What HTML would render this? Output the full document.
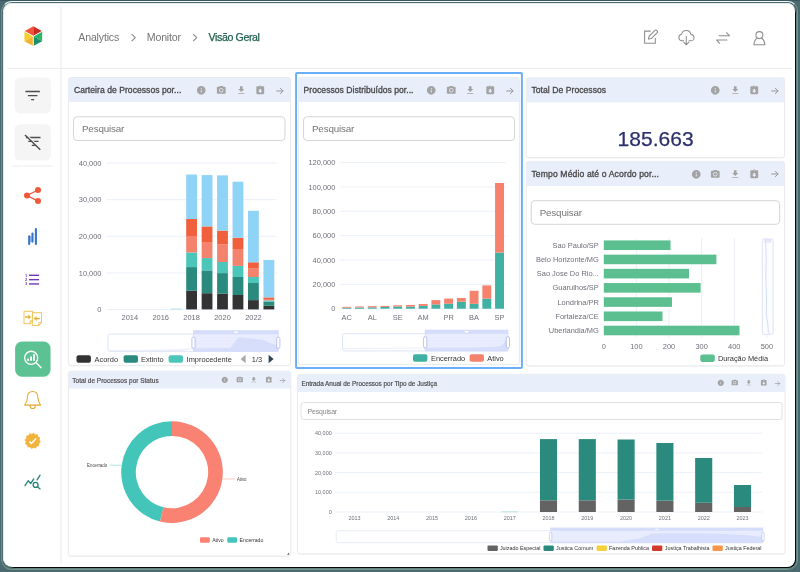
<!DOCTYPE html>
<html lang="pt-BR"><head><meta charset="utf-8"><title>Analytics - Monitor - Visão Geral</title>
<style>
*{box-sizing:border-box;margin:0;padding:0}
html,body{width:800px;height:572px;overflow:hidden;background:#4b6971;font-family:"Liberation Sans", sans-serif}
#frame{position:absolute;left:0;top:0;width:800px;height:572px;background:#4b6971;overflow:hidden;will-change:transform}
#toprow{position:absolute;left:0;top:0;width:800px;height:1px;background:#3a5862}
#bezel{position:absolute;left:1px;top:1px;width:797px;height:569px;box-sizing:border-box;border-style:solid;border-width:1px;border-color:#f6f9f9 #77937f #76927f #738f83;border-radius:11px 10px 10px 11px;background:#4c6a71}
#edge{position:absolute;left:5px;top:5px;width:791px;height:563px;background:#050808;border-radius:9px 8.500px 8px 9px;box-shadow:1px 1px 0 0 #5c867f}
#app{position:absolute;left:3px;top:3px;width:792px;height:564px;background:#fff;border-radius:8.500px 8px 7.500px 9px;overflow:hidden}
#tint{position:absolute;left:0;top:0;right:0;bottom:0;border-radius:8.500px 8px 7.500px 9px;box-shadow:inset 1px 1px 0 0 #e6ecec;pointer-events:none}
.bc{position:absolute;top:27px;height:20px;line-height:20px;font-size:10.600px;color:#757575;white-space:nowrap;letter-spacing:-0.180px}
.pt{position:absolute;color:#484848;font-weight:normal;white-space:nowrap;-webkit-text-stroke:0.300px #484848}
.ic{position:absolute;overflow:visible}
.search{position:absolute;color:#757575;white-space:nowrap;letter-spacing:-0.140px}
#ov,#bg{position:absolute;left:0;top:0;width:800px;height:572px;font-family:"Liberation Sans", sans-serif}
.big{position:absolute;left:526.400px;top:127.400px;width:258.500px;text-align:center;font-size:21px;letter-spacing:0.080px;line-height:24px;color:#2b2f6b;white-space:nowrap;-webkit-text-stroke:0.250px #2b2f6b}
</style></head>
<body><div id="frame"><div id="toprow"></div><div id="bezel"></div><div id="edge"></div><div id="app"><div id="tint"></div><div style="position:absolute;left:-3px;top:-3px;width:800px;height:572px"><svg id="bg" viewBox="0 0 800 572"><rect x="60.300" y="7" width="1.300" height="557" fill="#f0f0f0"/><rect x="7" y="67.900" width="784.800" height="1.000" fill="#ebebeb"/><rect x="14.650" y="77.550" width="36.300" height="35.900" rx="5.500" fill="#f5f5f5"/><rect x="14.600" y="124.200" width="36.250" height="36.300" rx="5.500" fill="#f5f5f5"/><rect x="12" y="165.500" width="40.800" height="1.000" fill="#ececec"/><rect x="15.100" y="341.500" width="35.450" height="35.300" rx="7" fill="#5dc293"/><rect x="68.1" y="78" width="222.7" height="288.5" rx="3" fill="#000" opacity="0.035"/><rect x="68.4" y="77.5" width="222.1" height="287.9" rx="2.5" fill="#fff" stroke="#e7e8eb" stroke-width="0.9"/><path d="M68.7 102 v-21.7 a2.5 2.5 0 0 1 2.5 -2.5 h216.5 a2.5 2.5 0 0 1 2.5 2.5 v21.7 z" fill="#e9eefb"/><rect x="296.100" y="73.000" width="225.800" height="294.900" rx="1" fill="#fff" stroke="#69aef8" stroke-width="2"/><rect x="298.1" y="77.8" width="221.6" height="287.7" rx="3" fill="#000" opacity="0.035"/><rect x="298.4" y="77.3" width="221" height="287.1" rx="2.5" fill="#fff" stroke="#e7e8eb" stroke-width="0.9"/><path d="M298.7 102 v-21.9 a2.5 2.5 0 0 1 2.5 -2.5 h215.4 a2.5 2.5 0 0 1 2.5 2.5 v21.9 z" fill="#e9eefb"/><rect x="525.9" y="78.3" width="259" height="80.4" rx="3" fill="#000" opacity="0.035"/><rect x="526.2" y="77.8" width="258.4" height="79.8" rx="2.5" fill="#fff" stroke="#e7e8eb" stroke-width="0.9"/><path d="M526.5 102.5 v-21.9 a2.5 2.5 0 0 1 2.5 -2.5 h252.8 a2.5 2.5 0 0 1 2.5 2.5 v21.9 z" fill="#e9eefb"/><rect x="525.9" y="161.8" width="259" height="205.1" rx="3" fill="#000" opacity="0.035"/><rect x="526.2" y="161.3" width="258.4" height="204.5" rx="2.5" fill="#fff" stroke="#e7e8eb" stroke-width="0.9"/><path d="M526.5 186.1 v-22 a2.5 2.5 0 0 1 2.5 -2.5 h252.8 a2.5 2.5 0 0 1 2.5 2.5 v22 z" fill="#e9eefb"/><rect x="68.1" y="371.7" width="223" height="185.4" rx="3" fill="#000" opacity="0.035"/><rect x="68.4" y="371.2" width="222.4" height="184.8" rx="2.5" fill="#fff" stroke="#e7e8eb" stroke-width="0.9"/><path d="M68.7 388.6 v-14.6 a2.5 2.5 0 0 1 2.5 -2.5 h216.8 a2.5 2.5 0 0 1 2.5 2.5 v14.6 z" fill="#e9eefb"/><rect x="297.2" y="374.8" width="488.2" height="180.1" rx="3" fill="#000" opacity="0.035"/><rect x="297.5" y="374.3" width="487.6" height="179.5" rx="2.5" fill="#fff" stroke="#e7e8eb" stroke-width="0.9"/><path d="M297.8 392.1 v-15 a2.5 2.5 0 0 1 2.5 -2.5 h482 a2.5 2.5 0 0 1 2.5 2.5 v15 z" fill="#e9eefb"/><rect x="73.55" y="116.75" width="211.4" height="23.7" rx="3.5" fill="#fff" stroke="#d2d6d6" stroke-width="1"/><rect x="303.55" y="116.75" width="211" height="23.7" rx="3.5" fill="#fff" stroke="#d2d6d6" stroke-width="1"/><rect x="531.25" y="200.7" width="248.4" height="23.6" rx="3.5" fill="#fff" stroke="#d2d6d6" stroke-width="1"/><rect x="301" y="402.5" width="481.1" height="17" rx="2.5" fill="#fff" stroke="#dfe1e2" stroke-width="1"/></svg><div class="bc" style="left:78.300px">Analytics</div><div class="bc" style="left:146.800px">Monitor</div><div class="bc" style="left:208.600px;color:#24614f;letter-spacing:-0.380px;-webkit-text-stroke:0.250px #24614f">Visão Geral</div><div class="pt" style="left:73.9px;top:78.1px;height:24.5px;line-height:24.5px;font-size:8.6px;letter-spacing:0.032px;-webkit-text-stroke-width:0.3px">Carteira de Processos por...</div><svg class="ic" style="left:196.35px;top:85.25px;width:10.5px;height:10.5px" viewBox="0 0 24 24" fill="#a3a3a3"><path d="M12 2C6.48 2 2 6.48 2 12s4.48 10 10 10 10-4.48 10-10S17.52 2 12 2zm1 15h-2v-6h2v6zm0-8h-2V7h2v2z"/></svg><svg class="ic" style="left:216.05px;top:85.25px;width:10.5px;height:10.5px" viewBox="0 0 24 24" fill="#a3a3a3"><circle cx="12" cy="12" r="3.2"/><path d="M9 2L7.17 4H4c-1.1 0-2 .9-2 2v12c0 1.1.9 2 2 2h16c1.1 0 2-.9 2-2V6c0-1.1-.9-2-2-2h-3.17L15 2H9zm3 15c-2.76 0-5-2.24-5-5s2.240-5 5-5 5 2.240 5 5-2.240 5-5 5z"/></svg><svg class="ic" style="left:235.75px;top:85.25px;width:10.5px;height:10.5px" viewBox="0 0 24 24" fill="#a3a3a3"><path d="M19 9h-4V3H9v6H5l7 7 7-7zM5 18v2h14v-2H5z"/></svg><svg class="ic" style="left:255.35px;top:85.25px;width:10.5px;height:10.5px" viewBox="0 0 24 24" fill="#a3a3a3"><path d="M19 3h-4.180C14.4 1.84 13.3 1 12 1c-1.3 0-2.400.84-2.820 2H5c-1.100 0-2 .9-2 2v14c0 1.100.9 2 2 2h14c1.100 0 2-.9 2-2V5c0-1.100-.9-2-2-2zm-7 0c.55 0 1 .45 1 1s-.45 1-1 1-1-.45-1-1 .45-1 1-1zm0 15l-5-5h3V9h4v4h3l-5 5z"/></svg><svg class="ic" style="left:275.11px;top:85.51px;width:9.97px;height:9.97px" viewBox="0 0 24 24" fill="#a3a3a3"><path d="M4 12h15M13 5.500l6.500 6.500-6.500 6.500" fill="none" stroke="#939393" stroke-width="2.300" stroke-linecap="round" stroke-linejoin="round"/></svg><div class="search" style="left:73.55px;top:116.75px;width:211.4px;height:23.7px;line-height:23.7px;font-size:9.8px;padding-left:8.4px;color:#757575">Pesquisar</div><div class="pt" style="left:303.6px;top:77.9px;height:24.7px;line-height:24.7px;font-size:8.6px;letter-spacing:0.018px;-webkit-text-stroke-width:0.3px">Processos Distribuídos por...</div><svg class="ic" style="left:425.85px;top:85.25px;width:10.5px;height:10.5px" viewBox="0 0 24 24" fill="#a3a3a3"><path d="M12 2C6.48 2 2 6.48 2 12s4.48 10 10 10 10-4.48 10-10S17.52 2 12 2zm1 15h-2v-6h2v6zm0-8h-2V7h2v2z"/></svg><svg class="ic" style="left:445.55px;top:85.25px;width:10.5px;height:10.5px" viewBox="0 0 24 24" fill="#a3a3a3"><circle cx="12" cy="12" r="3.2"/><path d="M9 2L7.17 4H4c-1.1 0-2 .9-2 2v12c0 1.1.9 2 2 2h16c1.1 0 2-.9 2-2V6c0-1.1-.9-2-2-2h-3.17L15 2H9zm3 15c-2.76 0-5-2.24-5-5s2.240-5 5-5 5 2.240 5 5-2.240 5-5 5z"/></svg><svg class="ic" style="left:465.05px;top:85.25px;width:10.5px;height:10.5px" viewBox="0 0 24 24" fill="#a3a3a3"><path d="M19 9h-4V3H9v6H5l7 7 7-7zM5 18v2h14v-2H5z"/></svg><svg class="ic" style="left:484.65px;top:85.25px;width:10.5px;height:10.5px" viewBox="0 0 24 24" fill="#a3a3a3"><path d="M19 3h-4.180C14.4 1.84 13.3 1 12 1c-1.3 0-2.400.84-2.820 2H5c-1.100 0-2 .9-2 2v14c0 1.100.9 2 2 2h14c1.100 0 2-.9 2-2V5c0-1.100-.9-2-2-2zm-7 0c.55 0 1 .45 1 1s-.45 1-1 1-1-.45-1-1 .45-1 1-1zm0 15l-5-5h3V9h4v4h3l-5 5z"/></svg><svg class="ic" style="left:504.51px;top:85.51px;width:9.97px;height:9.97px" viewBox="0 0 24 24" fill="#a3a3a3"><path d="M4 12h15M13 5.500l6.500 6.500-6.500 6.500" fill="none" stroke="#939393" stroke-width="2.300" stroke-linecap="round" stroke-linejoin="round"/></svg><div class="search" style="left:303.55px;top:116.75px;width:211px;height:23.7px;line-height:23.7px;font-size:9.8px;padding-left:8.4px;color:#757575">Pesquisar</div><div class="pt" style="left:531.4px;top:78.4px;height:24.7px;line-height:24.7px;font-size:8.6px;letter-spacing:0.044px;-webkit-text-stroke-width:0.3px">Total De Processos</div><svg class="ic" style="left:710.25px;top:85.35px;width:10.5px;height:10.5px" viewBox="0 0 24 24" fill="#a3a3a3"><path d="M12 2C6.48 2 2 6.48 2 12s4.48 10 10 10 10-4.48 10-10S17.52 2 12 2zm1 15h-2v-6h2v6zm0-8h-2V7h2v2z"/></svg><svg class="ic" style="left:729.85px;top:85.35px;width:10.5px;height:10.5px" viewBox="0 0 24 24" fill="#a3a3a3"><path d="M19 9h-4V3H9v6H5l7 7 7-7zM5 18v2h14v-2H5z"/></svg><svg class="ic" style="left:749.45px;top:85.35px;width:10.5px;height:10.5px" viewBox="0 0 24 24" fill="#a3a3a3"><path d="M19 3h-4.180C14.4 1.84 13.3 1 12 1c-1.3 0-2.400.84-2.820 2H5c-1.100 0-2 .9-2 2v14c0 1.100.9 2 2 2h14c1.100 0 2-.9 2-2V5c0-1.100-.9-2-2-2zm-7 0c.55 0 1 .45 1 1s-.45 1-1 1-1-.45-1-1 .45-1 1-1zm0 15l-5-5h3V9h4v4h3l-5 5z"/></svg><svg class="ic" style="left:769.51px;top:85.61px;width:9.97px;height:9.97px" viewBox="0 0 24 24" fill="#a3a3a3"><path d="M4 12h15M13 5.500l6.500 6.500-6.500 6.500" fill="none" stroke="#939393" stroke-width="2.300" stroke-linecap="round" stroke-linejoin="round"/></svg><div class="big">185.663</div><div class="pt" style="left:531.4px;top:161.9px;height:24.8px;line-height:24.8px;font-size:8.6px;letter-spacing:0.128px;-webkit-text-stroke-width:0.3px">Tempo Médio até o Acordo por...</div><svg class="ic" style="left:690.65px;top:168.85px;width:10.5px;height:10.5px" viewBox="0 0 24 24" fill="#a3a3a3"><path d="M12 2C6.48 2 2 6.48 2 12s4.48 10 10 10 10-4.48 10-10S17.52 2 12 2zm1 15h-2v-6h2v6zm0-8h-2V7h2v2z"/></svg><svg class="ic" style="left:710.25px;top:168.85px;width:10.5px;height:10.5px" viewBox="0 0 24 24" fill="#a3a3a3"><circle cx="12" cy="12" r="3.2"/><path d="M9 2L7.17 4H4c-1.1 0-2 .9-2 2v12c0 1.1.9 2 2 2h16c1.1 0 2-.9 2-2V6c0-1.1-.9-2-2-2h-3.17L15 2H9zm3 15c-2.76 0-5-2.24-5-5s2.240-5 5-5 5 2.240 5 5-2.240 5-5 5z"/></svg><svg class="ic" style="left:729.85px;top:168.85px;width:10.5px;height:10.5px" viewBox="0 0 24 24" fill="#a3a3a3"><path d="M19 9h-4V3H9v6H5l7 7 7-7zM5 18v2h14v-2H5z"/></svg><svg class="ic" style="left:749.45px;top:168.85px;width:10.5px;height:10.5px" viewBox="0 0 24 24" fill="#a3a3a3"><path d="M19 3h-4.180C14.4 1.84 13.3 1 12 1c-1.3 0-2.400.84-2.820 2H5c-1.100 0-2 .9-2 2v14c0 1.100.9 2 2 2h14c1.100 0 2-.9 2-2V5c0-1.100-.9-2-2-2zm-7 0c.55 0 1 .45 1 1s-.45 1-1 1-1-.45-1-1 .45-1 1-1zm0 15l-5-5h3V9h4v4h3l-5 5z"/></svg><svg class="ic" style="left:769.51px;top:169.11px;width:9.97px;height:9.97px" viewBox="0 0 24 24" fill="#a3a3a3"><path d="M4 12h15M13 5.500l6.500 6.500-6.500 6.500" fill="none" stroke="#939393" stroke-width="2.300" stroke-linecap="round" stroke-linejoin="round"/></svg><div class="search" style="left:531.25px;top:200.7px;width:248.4px;height:23.6px;line-height:23.6px;font-size:9.8px;padding-left:8.4px;color:#757575">Pesquisar</div><div class="pt" style="left:72.3px;top:371.6px;height:17.4px;line-height:17.4px;font-size:6.5px;letter-spacing:0.000px;-webkit-text-stroke-width:0.16px">Total de Processos por Status</div><svg class="ic" style="left:221.45px;top:376.45px;width:7.5px;height:7.5px" viewBox="0 0 24 24" fill="#a3a3a3"><path d="M12 2C6.48 2 2 6.48 2 12s4.48 10 10 10 10-4.48 10-10S17.52 2 12 2zm1 15h-2v-6h2v6zm0-8h-2V7h2v2z"/></svg><svg class="ic" style="left:236.05px;top:376.45px;width:7.5px;height:7.5px" viewBox="0 0 24 24" fill="#a3a3a3"><circle cx="12" cy="12" r="3.2"/><path d="M9 2L7.17 4H4c-1.1 0-2 .9-2 2v12c0 1.1.9 2 2 2h16c1.1 0 2-.9 2-2V6c0-1.1-.9-2-2-2h-3.17L15 2H9zm3 15c-2.76 0-5-2.24-5-5s2.240-5 5-5 5 2.240 5 5-2.240 5-5 5z"/></svg><svg class="ic" style="left:250.15px;top:376.45px;width:7.5px;height:7.5px" viewBox="0 0 24 24" fill="#a3a3a3"><path d="M19 9h-4V3H9v6H5l7 7 7-7zM5 18v2h14v-2H5z"/></svg><svg class="ic" style="left:264.75px;top:376.45px;width:7.5px;height:7.5px" viewBox="0 0 24 24" fill="#a3a3a3"><path d="M19 3h-4.180C14.4 1.84 13.3 1 12 1c-1.3 0-2.400.84-2.820 2H5c-1.100 0-2 .9-2 2v14c0 1.100.9 2 2 2h14c1.100 0 2-.9 2-2V5c0-1.100-.9-2-2-2zm-7 0c.55 0 1 .45 1 1s-.45 1-1 1-1-.45-1-1 .45-1 1-1zm0 15l-5-5h3V9h4v4h3l-5 5z"/></svg><svg class="ic" style="left:279.34px;top:376.64px;width:7.12px;height:7.12px" viewBox="0 0 24 24" fill="#a3a3a3"><path d="M4 12h15M13 5.500l6.500 6.500-6.500 6.500" fill="none" stroke="#939393" stroke-width="2.300" stroke-linecap="round" stroke-linejoin="round"/></svg><div class="pt" style="left:301.4px;top:374.7px;height:17.8px;line-height:17.8px;font-size:6.4px;letter-spacing:-0.010px;-webkit-text-stroke-width:0.16px">Entrada Anual de Processos por Tipo de Justiça</div><svg class="ic" style="left:717.05px;top:379.35px;width:7.5px;height:7.5px" viewBox="0 0 24 24" fill="#a3a3a3"><path d="M12 2C6.48 2 2 6.48 2 12s4.48 10 10 10 10-4.48 10-10S17.52 2 12 2zm1 15h-2v-6h2v6zm0-8h-2V7h2v2z"/></svg><svg class="ic" style="left:731.35px;top:379.35px;width:7.5px;height:7.5px" viewBox="0 0 24 24" fill="#a3a3a3"><circle cx="12" cy="12" r="3.2"/><path d="M9 2L7.17 4H4c-1.1 0-2 .9-2 2v12c0 1.1.9 2 2 2h16c1.1 0 2-.9 2-2V6c0-1.1-.9-2-2-2h-3.17L15 2H9zm3 15c-2.76 0-5-2.24-5-5s2.240-5 5-5 5 2.240 5 5-2.240 5-5 5z"/></svg><svg class="ic" style="left:745.35px;top:379.35px;width:7.5px;height:7.5px" viewBox="0 0 24 24" fill="#a3a3a3"><path d="M19 9h-4V3H9v6H5l7 7 7-7zM5 18v2h14v-2H5z"/></svg><svg class="ic" style="left:759.65px;top:379.35px;width:7.5px;height:7.5px" viewBox="0 0 24 24" fill="#a3a3a3"><path d="M19 3h-4.180C14.4 1.84 13.3 1 12 1c-1.3 0-2.400.84-2.820 2H5c-1.100 0-2 .9-2 2v14c0 1.100.9 2 2 2h14c1.100 0 2-.9 2-2V5c0-1.100-.9-2-2-2zm-7 0c.55 0 1 .45 1 1s-.45 1-1 1-1-.45-1-1 .45-1 1-1zm0 15l-5-5h3V9h4v4h3l-5 5z"/></svg><svg class="ic" style="left:774.24px;top:379.54px;width:7.12px;height:7.12px" viewBox="0 0 24 24" fill="#a3a3a3"><path d="M4 12h15M13 5.500l6.500 6.500-6.500 6.500" fill="none" stroke="#939393" stroke-width="2.300" stroke-linecap="round" stroke-linejoin="round"/></svg><div class="search" style="left:301px;top:402.5px;width:481.1px;height:17px;line-height:17px;font-size:6.9px;padding-left:6.6px;color:#858585">Pesquisar</div><svg id="ov" viewBox="0 0 800 572"><defs><pattern id="dots" width="3.2" height="3.2" patternUnits="userSpaceOnUse"><circle cx="1.6" cy="1.6" r="0.42" fill="#ccd6f8"/></pattern></defs><polygon points="33.3,26.3 24.43,31.25 33.3,36.2" fill="#f0553a"/><polygon points="33.3,26.3 42.17,31.25 33.3,36.2" fill="#cb2a20"/><polygon points="24.43,31.25 33.3,36.2 24.43,41.15" fill="#f6cf2f"/><polygon points="33.3,36.2 33.3,46.1 24.43,41.15" fill="#f3b231"/><polygon points="42.17,31.25 42.17,41.15 33.3,36.2" fill="#2fb567"/><polygon points="33.3,36.2 42.17,41.15 33.3,46.1" fill="#19916b"/><g stroke="#fff" stroke-width="0.900"><line x1="33.3" y1="36.2" x2="42.17" y2="31.25"/><line x1="33.3" y1="36.2" x2="33.3" y2="46.1"/><line x1="33.3" y1="36.2" x2="24.43" y2="31.25"/></g><path d="M131.9 34.4 l3.400 3.200 l-3.400 3.200" fill="none" stroke="#858585" stroke-width="1.050" stroke-linecap="round" stroke-linejoin="round"/><path d="M193.4 34.4 l3.400 3.200 l-3.400 3.200" fill="none" stroke="#858585" stroke-width="1.050" stroke-linecap="round" stroke-linejoin="round"/><g fill="none" stroke="#8d8d8d" stroke-width="1.050" stroke-linecap="round" stroke-linejoin="round"><path d="M650.300 31.100 H644.600 V43.300 H655.300 V38.200"/><path d="M649.000 36.300 L654.900 30.400 a1.150 1.150 0 0 1 1.650 0 l0.650 0.650 a1.150 1.150 0 0 1 0 1.650 L651.300 38.600 L648.500 39.100 Z"/><path d="M683.700 40.800 H682.100 a3.300 3.300 0 0 1 -0.500 -6.550 a4.750 4.750 0 0 1 9.300 0.150 a3.200 3.200 0 0 1 -0.100 6.400 H689.000"/><path d="M686.300 36.400 V44.700 M683.700 42.200 L686.300 44.800 L688.900 42.200"/><path d="M719.100 35.800 H729.600 L726.500 32.700"/><path d="M727.000 39.900 H716.500 L719.600 43.300"/><circle cx="759.400" cy="35.100" r="3.500"/><path d="M757.300 38.000 C755.500 39.200 754.100 41.600 753.900 44.700 H764.900 C764.700 41.600 763.300 39.200 761.500 38.000"/></g><g stroke="#4d4d4d" stroke-width="1.400" stroke-linecap="butt"><line x1="25.4" x2="39.9" y1="91.55" y2="91.55"/><line x1="27.85" x2="37.45" y1="95.6" y2="95.6"/><line x1="31.15" x2="34.15" y1="99.6" y2="99.6"/></g><g stroke="#4d4d4d" stroke-width="1.300"><line x1="26.0" x2="40.5" y1="137.5" y2="137.5"/><line x1="28.3" x2="38.5" y1="141.4" y2="141.4"/><line x1="31.8" x2="35.4" y1="145.3" y2="145.3"/><line x1="25.9" y1="134.3" x2="41.2" y2="149.2" stroke="#f5f5f5" stroke-width="1.500"/><line x1="25.0" y1="134.9" x2="40.3" y2="149.8" stroke-width="1.400"/></g><g fill="#f0583a" stroke="#f0583a"><path d="M38 190 L27 195.5 L38 201.1" fill="none" stroke-width="1.300"/><circle cx="38" cy="190" r="3.000" stroke="none"/><circle cx="27" cy="195.5" r="3.000" stroke="none"/><circle cx="38" cy="201.1" r="3.000" stroke="none"/></g><rect x="30.1" y="236.2" width="1.6" height="6" fill="#a4c0ea" /><g stroke="#3676c9" stroke-width="2.100" stroke-linecap="round"><line x1="29.2" x2="29.2" y1="236.2" y2="244.0"/><line x1="32.5" x2="32.5" y1="233.5" y2="241.6"/><line x1="35.9" x2="35.9" y1="229.0" y2="244.0"/></g><g stroke="#6d38ba" stroke-width="1.400"><line x1="29.0" x2="39.1" y1="275.3" y2="275.3"/><line x1="29.0" x2="39.1" y1="279.65" y2="279.65"/><line x1="29.0" x2="39.1" y1="283.95" y2="283.95"/></g><text x="26.2" y="276.75" font-size="4" text-anchor="middle" fill="#6d38ba" font-weight="bold" >1</text><text x="26.2" y="281.1" font-size="4" text-anchor="middle" fill="#6d38ba" font-weight="bold" >2</text><text x="26.2" y="285.4" font-size="4" text-anchor="middle" fill="#6d38ba" font-weight="bold" >3</text><g fill="#fff" stroke="#edb93f" stroke-width="0.850" stroke-linejoin="round" stroke-linecap="round"><path d="M24.4 311.3 h8.500 v9.500 l-2.700 2.900 h-5.800 z"/><path d="M32.9 320.8 h-2.700 v2.900" fill="none"/><path d="M32.750 312.700 h8.800 v9.900 l-2.800 3.000 h-6.000 z"/><path d="M41.550 322.600 h-2.800 v3.000" fill="none"/></g><g fill="none" stroke="#e9ab2b" stroke-width="1.000" stroke-linecap="round" stroke-linejoin="round"><path d="M25.0 317.0 h4.000" stroke-width="1.300" stroke-linecap="butt"/><path d="M28.600 315.300 l2.200 1.700 l-2.200 1.700 z" fill="#e9ab2b" stroke-width="0.500"/><path d="M39.800 318.600 h-4.000" stroke-width="1.300" stroke-linecap="butt"/><path d="M36.200 316.900 l-2.200 1.700 l2.200 1.700 z" fill="#e9ab2b" stroke-width="0.500"/></g><g fill="none" stroke="#fff" stroke-linecap="round"><circle cx="31.2" cy="357.800" r="6.550" stroke-width="1.300"/><line x1="36.1" y1="362.700" x2="40.900" y2="367.600" stroke-width="1.500"/></g><rect x="27.1" y="358.6" width="1.9" height="2.2" fill="#fff" /><rect x="30.1" y="356.4" width="1.9" height="4.4" fill="#fff" /><rect x="33.1" y="354.2" width="1.9" height="6.6" fill="#fff" /><g fill="none" stroke="#e4a82e" stroke-width="1.050" stroke-linejoin="round" stroke-linecap="round"><path d="M24.700 405.100 C26.700 402.600 27.500 400.600 27.500 397.000 C27.500 393.500 29.700 391.450 32.650 391.450 C35.600 391.450 37.800 393.500 37.800 397.000 C37.800 400.600 38.600 402.600 40.600 405.100 Z"/><path d="M30.000 405.400 a2.650 3.100 0 0 0 5.300 0"/></g><polygon points="33.68,433.02 35.21,434.66 37.46,434.58 37.97,436.77 39.95,437.83 39.29,439.98 40.48,441.88 38.84,443.41 38.92,445.66 36.73,446.17 35.67,448.15 33.52,447.49 31.62,448.68 30.09,447.04 27.84,447.12 27.33,444.93 25.35,443.87 26.01,441.72 24.82,439.82 26.46,438.29 26.38,436.04 28.57,435.53 29.63,433.55 31.78,434.21" fill="#f0b33c" stroke="#f0b33c" stroke-width="0.500" stroke-linejoin="round"/><path d="M29.400 441.500 l1.950 2.000 l4.850 -4.900" fill="none" stroke="#fff" stroke-width="1.450" stroke-linecap="butt" stroke-linejoin="miter"/><g fill="none" stroke="#22857a" stroke-width="1.300" stroke-linecap="round" stroke-linejoin="round"><path d="M25.000 485.700 L28.200 480.750 L30.600 483.500 L33.800 479.000"/><line x1="37.100" y1="479.900" x2="40.100" y2="475.200"/><circle cx="35.600" cy="484.900" r="2.450"/><line x1="37.500" y1="486.800" x2="40.100" y2="488.900"/></g><line x1="106.6" x2="276.6" y1="163.1" y2="163.1" stroke="#e4ebf8" stroke-width="0.8"/><text x="101.5" y="165.7" font-size="7.45" text-anchor="end" fill="#6e7079" font-weight="normal" >40,000</text><line x1="106.6" x2="276.6" y1="199.7" y2="199.7" stroke="#e4ebf8" stroke-width="0.8"/><text x="101.5" y="202.3" font-size="7.45" text-anchor="end" fill="#6e7079" font-weight="normal" >30,000</text><line x1="106.6" x2="276.6" y1="236.3" y2="236.3" stroke="#e4ebf8" stroke-width="0.8"/><text x="101.5" y="238.9" font-size="7.45" text-anchor="end" fill="#6e7079" font-weight="normal" >20,000</text><line x1="106.6" x2="276.6" y1="272.95" y2="272.95" stroke="#e4ebf8" stroke-width="0.8"/><text x="101.5" y="275.55" font-size="7.45" text-anchor="end" fill="#6e7079" font-weight="normal" >10,000</text><line x1="106.6" x2="276.6" y1="309.5" y2="309.5" stroke="#e4ebf8" stroke-width="0.8"/><text x="101.5" y="312.1" font-size="7.45" text-anchor="end" fill="#6e7079" font-weight="normal" >0</text><rect x="186.2" y="290.8" width="10.8" height="18.6" fill="#333333" /><rect x="186.2" y="267.1" width="10.8" height="23.7" fill="#2b8a7e" /><rect x="186.2" y="252.4" width="10.8" height="14.7" fill="#4bc6b9" /><rect x="186.2" y="236" width="10.8" height="16.4" fill="#f4836d" /><rect x="186.2" y="219" width="10.8" height="17" fill="#f0603d" /><rect x="186.2" y="174.5" width="10.8" height="44.5" fill="#8fd3f6" /><rect x="201.65" y="293.2" width="10.8" height="16.2" fill="#333333" /><rect x="201.65" y="270.4" width="10.8" height="22.8" fill="#2b8a7e" /><rect x="201.65" y="258.1" width="10.8" height="12.3" fill="#4bc6b9" /><rect x="201.65" y="242" width="10.8" height="16.1" fill="#f4836d" /><rect x="201.65" y="226.4" width="10.8" height="15.6" fill="#f0603d" /><rect x="201.65" y="175.1" width="10.8" height="51.3" fill="#8fd3f6" /><rect x="217.11" y="293.8" width="10.8" height="15.6" fill="#333333" /><rect x="217.11" y="273.1" width="10.8" height="20.7" fill="#2b8a7e" /><rect x="217.11" y="262" width="10.8" height="11.1" fill="#4bc6b9" /><rect x="217.11" y="244.4" width="10.8" height="17.6" fill="#f4836d" /><rect x="217.11" y="230.6" width="10.8" height="13.8" fill="#f0603d" /><rect x="217.11" y="175.4" width="10.8" height="55.2" fill="#8fd3f6" /><rect x="232.56" y="295" width="10.8" height="14.4" fill="#333333" /><rect x="232.56" y="277" width="10.8" height="18" fill="#2b8a7e" /><rect x="232.56" y="265.9" width="10.8" height="11.1" fill="#4bc6b9" /><rect x="232.56" y="249" width="10.8" height="16.9" fill="#f4836d" /><rect x="232.56" y="237.8" width="10.8" height="11.2" fill="#f0603d" /><rect x="232.56" y="181.7" width="10.8" height="56.1" fill="#8fd3f6" /><rect x="248.02" y="300.1" width="10.8" height="9.3" fill="#333333" /><rect x="248.02" y="283" width="10.8" height="17.1" fill="#2b8a7e" /><rect x="248.02" y="277" width="10.8" height="6" fill="#4bc6b9" /><rect x="248.02" y="268.6" width="10.8" height="8.4" fill="#f4836d" /><rect x="248.02" y="262.3" width="10.8" height="6.3" fill="#f0603d" /><rect x="248.02" y="210.8" width="10.8" height="51.5" fill="#8fd3f6" /><rect x="263.47" y="305.8" width="10.8" height="3.6" fill="#333333" /><rect x="263.47" y="301.6" width="10.8" height="4.2" fill="#2b8a7e" /><rect x="263.47" y="300.4" width="10.8" height="1.2" fill="#4bc6b9" /><rect x="263.47" y="299" width="10.8" height="1.4" fill="#f4836d" /><rect x="263.47" y="297.4" width="10.8" height="1.6" fill="#f0603d" /><rect x="263.47" y="260" width="10.8" height="37.4" fill="#8fd3f6" /><rect x="170.75" y="308.6" width="10.8" height="0.8" fill="#a9dfe0" /><text x="129.78" y="320" font-size="7.45" text-anchor="middle" fill="#6e7079" font-weight="normal" >2014</text><text x="160.69" y="320" font-size="7.45" text-anchor="middle" fill="#6e7079" font-weight="normal" >2016</text><text x="191.6" y="320" font-size="7.45" text-anchor="middle" fill="#6e7079" font-weight="normal" >2018</text><text x="222.51" y="320" font-size="7.45" text-anchor="middle" fill="#6e7079" font-weight="normal" >2020</text><text x="253.42" y="320" font-size="7.45" text-anchor="middle" fill="#6e7079" font-weight="normal" >2022</text><rect x="108" y="334.1" width="170.3" height="17.2" fill="#ffffff" stroke="#d6def3" stroke-width="0.8" rx="1.500"/><polyline points="108.4,350.9 176,350.8 193.5,348.3" fill="#f3f5fd" stroke="#dfe5f7" stroke-width="0.64"/><rect x="193.5" y="330.3" width="84.8" height="21" fill="#e9edfd" /><polygon points="193.5,351.3 193.5,348.3 230.2,348.1 238.5,337.2 262.5,339.7 276.3,345.5 278.3,346.6 278.3,351.3" fill="#d6defb"/><rect x="194.5" y="335.1" width="82.8" height="15.2" fill="url(#dots)" /><rect x="193.5" y="330.3" width="84.8" height="4" fill="#d5ddfb" /><line x1="193.5" x2="278.3" y1="351.3" y2="351.3" stroke="#cfd8fa" stroke-width="0.8"/><line x1="193.5" x2="193.5" y1="330.3" y2="351.3" stroke="#cfd8fa" stroke-width="0.64"/><line x1="278.3" x2="278.3" y1="330.3" y2="351.3" stroke="#cfd8fa" stroke-width="0.64"/><rect x="234" y="331.5" width="4" height="1.41" fill="#ffffff" rx="0.7"/><rect x="191.9" y="337.1" width="3.2" height="11.2" fill="#ffffff" stroke="#a9b7ea" stroke-width="0.8" rx="1.44"/><rect x="276.7" y="337.1" width="3.2" height="11.2" fill="#ffffff" stroke="#a9b7ea" stroke-width="0.8" rx="1.44"/><rect x="76.5" y="355.25" width="14.4" height="7.5" fill="#333333" rx="2.000"/><text x="94.6" y="361.6" font-size="7.4" text-anchor="start" fill="#333" font-weight="normal" >Acordo</text><rect x="123.6" y="355.25" width="14.4" height="7.5" fill="#2b8a7e" rx="2.000"/><text x="141" y="361.6" font-size="7.4" text-anchor="start" fill="#333" font-weight="normal" >Extinto</text><rect x="168.6" y="355.25" width="14.4" height="7.5" fill="#4bc6b9" rx="2.000"/><text x="186.6" y="361.6" font-size="7.4" text-anchor="start" fill="#333" font-weight="normal" >Improcedente</text><path d="M240.6 359 l5 -4.200 v8.400z" fill="#aaaaaa"/><text x="257" y="361.6" font-size="7.4" text-anchor="middle" fill="#333" font-weight="normal" >1/3</text><path d="M273.6 359 l-5 -4.200 v8.400z" fill="#2f4554"/><line x1="340.4" x2="505.9" y1="308.7" y2="308.7" stroke="#e4ebf8" stroke-width="0.8"/><text x="335.3" y="311.3" font-size="7.45" text-anchor="end" fill="#6e7079" font-weight="normal" >0</text><line x1="340.4" x2="505.9" y1="284.35" y2="284.35" stroke="#e4ebf8" stroke-width="0.8"/><text x="335.3" y="286.95" font-size="7.45" text-anchor="end" fill="#6e7079" font-weight="normal" >20,000</text><line x1="340.4" x2="505.9" y1="260" y2="260" stroke="#e4ebf8" stroke-width="0.8"/><text x="335.3" y="262.6" font-size="7.45" text-anchor="end" fill="#6e7079" font-weight="normal" >40,000</text><line x1="340.4" x2="505.9" y1="235.65" y2="235.65" stroke="#e4ebf8" stroke-width="0.8"/><text x="335.3" y="238.25" font-size="7.45" text-anchor="end" fill="#6e7079" font-weight="normal" >60,000</text><line x1="340.4" x2="505.9" y1="211.3" y2="211.3" stroke="#e4ebf8" stroke-width="0.8"/><text x="335.3" y="213.9" font-size="7.45" text-anchor="end" fill="#6e7079" font-weight="normal" >80,000</text><line x1="340.4" x2="505.9" y1="186.95" y2="186.95" stroke="#e4ebf8" stroke-width="0.8"/><text x="335.3" y="189.55" font-size="7.45" text-anchor="end" fill="#6e7079" font-weight="normal" >100,000</text><line x1="340.4" x2="505.9" y1="162.6" y2="162.6" stroke="#e4ebf8" stroke-width="0.8"/><text x="335.3" y="165.2" font-size="7.45" text-anchor="end" fill="#6e7079" font-weight="normal" >120,000</text><rect x="342.32" y="307.7" width="8.9" height="1" fill="#3fb0a2" /><rect x="342.32" y="306.8" width="8.9" height="0.9" fill="#f4826c" /><rect x="355.05" y="307.5" width="8.9" height="1.2" fill="#3fb0a2" /><rect x="355.05" y="306.5" width="8.9" height="1" fill="#f4826c" /><rect x="367.78" y="307.3" width="8.9" height="1.4" fill="#3fb0a2" /><rect x="367.78" y="306.2" width="8.9" height="1.1" fill="#f4826c" /><rect x="380.51" y="307" width="8.9" height="1.7" fill="#3fb0a2" /><rect x="380.51" y="305.9" width="8.9" height="1.1" fill="#f4826c" /><rect x="393.24" y="306.5" width="8.9" height="2.2" fill="#3fb0a2" /><rect x="393.24" y="305.3" width="8.9" height="1.2" fill="#f4826c" /><rect x="405.97" y="306.6" width="8.9" height="2.1" fill="#3fb0a2" /><rect x="405.97" y="305" width="8.9" height="1.6" fill="#f4826c" /><rect x="418.7" y="305.9" width="8.9" height="2.8" fill="#3fb0a2" /><rect x="418.7" y="304" width="8.9" height="1.9" fill="#f4826c" /><rect x="431.43" y="304.4" width="8.9" height="4.3" fill="#3fb0a2" /><rect x="431.43" y="300.1" width="8.9" height="4.3" fill="#f4826c" /><rect x="444.16" y="303.8" width="8.9" height="4.9" fill="#3fb0a2" /><rect x="444.16" y="298.6" width="8.9" height="5.2" fill="#f4826c" /><rect x="456.89" y="301.7" width="8.9" height="7" fill="#3fb0a2" /><rect x="456.89" y="298" width="8.9" height="3.7" fill="#f4826c" /><rect x="469.62" y="303.8" width="8.9" height="4.9" fill="#3fb0a2" /><rect x="469.62" y="290.8" width="8.9" height="13" fill="#f4826c" /><rect x="482.35" y="298.6" width="8.9" height="10.1" fill="#3fb0a2" /><rect x="482.35" y="285.4" width="8.9" height="13.2" fill="#f4826c" /><rect x="495.08" y="252.6" width="8.9" height="56.1" fill="#3fb0a2" /><rect x="495.08" y="183" width="8.9" height="69.6" fill="#f4826c" /><text x="346.77" y="319.9" font-size="7.45" text-anchor="middle" fill="#6e7079" font-weight="normal" >AC</text><text x="372.23" y="319.9" font-size="7.45" text-anchor="middle" fill="#6e7079" font-weight="normal" >AL</text><text x="397.69" y="319.9" font-size="7.45" text-anchor="middle" fill="#6e7079" font-weight="normal" >SE</text><text x="423.15" y="319.9" font-size="7.45" text-anchor="middle" fill="#6e7079" font-weight="normal" >AM</text><text x="448.61" y="319.9" font-size="7.45" text-anchor="middle" fill="#6e7079" font-weight="normal" >PR</text><text x="474.07" y="319.9" font-size="7.45" text-anchor="middle" fill="#6e7079" font-weight="normal" >BA</text><text x="499.53" y="319.9" font-size="7.45" text-anchor="middle" fill="#6e7079" font-weight="normal" >SP</text><rect x="342.5" y="333.7" width="165.4" height="17.2" fill="#ffffff" stroke="#d6def3" stroke-width="0.8" rx="1.500"/><polyline points="342.9,348.6 425.2,348" fill="#f3f5fd" stroke="#dfe5f7" stroke-width="0.64"/><rect x="425.2" y="329.8" width="82.7" height="21.1" fill="#e9edfd" /><polygon points="425.2,350.9 425.2,348 470,347.7 492.5,347 500,346 503.5,344 505.6,340.5 507.9,338.6 507.9,350.9" fill="#d6defb"/><rect x="426.2" y="334.7" width="80.7" height="15.2" fill="url(#dots)" /><rect x="425.2" y="329.8" width="82.7" height="4.1" fill="#d5ddfb" /><line x1="425.2" x2="507.9" y1="350.9" y2="350.9" stroke="#cfd8fa" stroke-width="0.8"/><line x1="425.2" x2="425.2" y1="329.8" y2="350.9" stroke="#cfd8fa" stroke-width="0.64"/><line x1="507.9" x2="507.9" y1="329.8" y2="350.9" stroke="#cfd8fa" stroke-width="0.64"/><rect x="464.5" y="331.05" width="4" height="1.41" fill="#ffffff" rx="0.7"/><rect x="423.6" y="336.7" width="3.2" height="11.2" fill="#ffffff" stroke="#a9b7ea" stroke-width="0.8" rx="1.44"/><rect x="506.3" y="336.7" width="3.2" height="11.2" fill="#ffffff" stroke="#a9b7ea" stroke-width="0.8" rx="1.44"/><rect x="413" y="354.25" width="14.4" height="7.5" fill="#3fb0a2" rx="2.000"/><text x="431" y="360.6" font-size="7.4" text-anchor="start" fill="#333" font-weight="normal" >Encerrado</text><rect x="469.6" y="354.25" width="14.4" height="7.5" fill="#f4826c" rx="2.000"/><text x="487.3" y="360.6" font-size="7.4" text-anchor="start" fill="#333" font-weight="normal" >Ativo</text><text x="603.8" y="349.3" font-size="7.45" text-anchor="middle" fill="#6e7079" font-weight="normal" >0</text><line x1="636.42" x2="636.42" y1="238.1" y2="337.6" stroke="#e4ebf8" stroke-width="0.8"/><text x="636.42" y="349.3" font-size="7.45" text-anchor="middle" fill="#6e7079" font-weight="normal" >100</text><line x1="669.04" x2="669.04" y1="238.1" y2="337.6" stroke="#e4ebf8" stroke-width="0.8"/><text x="669.04" y="349.3" font-size="7.45" text-anchor="middle" fill="#6e7079" font-weight="normal" >200</text><line x1="701.66" x2="701.66" y1="238.1" y2="337.6" stroke="#e4ebf8" stroke-width="0.8"/><text x="701.66" y="349.3" font-size="7.45" text-anchor="middle" fill="#6e7079" font-weight="normal" >300</text><line x1="734.28" x2="734.28" y1="238.1" y2="337.6" stroke="#e4ebf8" stroke-width="0.8"/><text x="734.28" y="349.3" font-size="7.45" text-anchor="middle" fill="#6e7079" font-weight="normal" >400</text><line x1="766.9" x2="766.9" y1="238.1" y2="337.6" stroke="#e4ebf8" stroke-width="0.8"/><text x="766.9" y="349.3" font-size="7.45" text-anchor="middle" fill="#6e7079" font-weight="normal" >500</text><rect x="603.8" y="240.41" width="66.7" height="9.6" fill="#5cbf90" /><text x="598.8" y="247.81" font-size="7.45" text-anchor="end" fill="#6e7079" font-weight="normal" >Sao Paulo/SP</text><rect x="603.8" y="254.62" width="112.6" height="9.6" fill="#5cbf90" /><text x="598.8" y="262.02" font-size="7.45" text-anchor="end" fill="#6e7079" font-weight="normal" >Belo Horizonte/MG</text><rect x="603.8" y="268.84" width="85.2" height="9.6" fill="#5cbf90" /><text x="598.8" y="276.24" font-size="7.45" text-anchor="end" fill="#6e7079" font-weight="normal" >Sao Jose Do Rio...</text><rect x="603.8" y="283.05" width="96.8" height="9.6" fill="#5cbf90" /><text x="598.8" y="290.45" font-size="7.45" text-anchor="end" fill="#6e7079" font-weight="normal" >Guarulhos/SP</text><rect x="603.8" y="297.26" width="68.2" height="9.6" fill="#5cbf90" /><text x="598.8" y="304.66" font-size="7.45" text-anchor="end" fill="#6e7079" font-weight="normal" >Londrina/PR</text><rect x="603.8" y="311.48" width="58.7" height="9.6" fill="#5cbf90" /><text x="598.8" y="318.88" font-size="7.45" text-anchor="end" fill="#6e7079" font-weight="normal" >Fortaleza/CE</text><rect x="603.8" y="325.69" width="135.7" height="9.6" fill="#5cbf90" /><text x="598.8" y="333.09" font-size="7.45" text-anchor="end" fill="#6e7079" font-weight="normal" >Uberlandia/MG</text><rect x="762.3" y="239.1" width="10.8" height="95.3" fill="#fcfdff" stroke="#d3dcf6" stroke-width="0.8" rx="1.500"/><path d="M765.6 240 l0.6 20 l-0.4 18 l0.8 22 l-0.300 14 l1.500 10 l0.6 8 l1.500 2" fill="none" stroke="#c3cff5" stroke-width="0.7"/><rect x="764.6" y="240.2" width="6.4" height="1.8" fill="#ffffff" stroke="#aebbe0" stroke-width="0.5" rx="0.8"/><rect x="700.3" y="354.45" width="14.5" height="7.5" fill="#5cbf90" rx="2.000"/><text x="717.9" y="360.8" font-size="7.4" text-anchor="start" fill="#333" font-weight="normal" >Duração Média</text><path d="M172 421.3 A50.8 50.8 0 1 1 159.88 521.43 L163.37 507.26 A36.2 36.2 0 1 0 172 435.9 Z" fill="#f98272"/><path d="M159.88 521.43 A50.8 50.8 0 0 1 172 421.3 L172 435.9 A36.2 36.2 0 0 0 163.37 507.26 Z" fill="#43c5ba"/><line x1="109.3" x2="121.4" y1="465.2" y2="465.2" stroke="#8edbd4" stroke-width="0.7"/><text x="107.1" y="466.8" font-size="4.8" text-anchor="end" fill="#444" font-weight="normal" textLength="20" lengthAdjust="spacingAndGlyphs">Encerrado</text><line x1="222.6" x2="235" y1="479" y2="479" stroke="#fbb5ab" stroke-width="0.7"/><text x="237" y="480.9" font-size="4.8" text-anchor="start" fill="#444" font-weight="normal" textLength="9.500" lengthAdjust="spacingAndGlyphs">Ativo</text><rect x="200" y="537.2" width="9.8" height="5.6" fill="#f98272" rx="1.200"/><text x="212.2" y="541.8" font-size="5.15" text-anchor="start" fill="#333" font-weight="normal" >Ativo</text><rect x="227.3" y="537.2" width="9.8" height="5.6" fill="#43c5ba" rx="1.200"/><text x="239.6" y="541.8" font-size="5.15" text-anchor="start" fill="#333" font-weight="normal" >Encerrado</text><path d="M289.2 552.6 v2.200 h-2.200z" fill="#555"/><line x1="335.1" x2="762.6" y1="512" y2="512" stroke="#e4ebf8" stroke-width="0.7"/><text x="331.7" y="513.9" font-size="5.45" text-anchor="end" fill="#6e7079" font-weight="normal" >0</text><line x1="335.1" x2="762.6" y1="492.3" y2="492.3" stroke="#e4ebf8" stroke-width="0.7"/><text x="331.7" y="494.2" font-size="5.45" text-anchor="end" fill="#6e7079" font-weight="normal" >10,000</text><line x1="335.1" x2="762.6" y1="472.6" y2="472.6" stroke="#e4ebf8" stroke-width="0.7"/><text x="331.7" y="474.5" font-size="5.45" text-anchor="end" fill="#6e7079" font-weight="normal" >20,000</text><line x1="335.1" x2="762.6" y1="452.9" y2="452.9" stroke="#e4ebf8" stroke-width="0.7"/><text x="331.7" y="454.8" font-size="5.45" text-anchor="end" fill="#6e7079" font-weight="normal" >30,000</text><line x1="335.1" x2="762.6" y1="433.2" y2="433.2" stroke="#e4ebf8" stroke-width="0.7"/><text x="331.7" y="435.1" font-size="5.45" text-anchor="end" fill="#6e7079" font-weight="normal" >40,000</text><rect x="539.95" y="500.3" width="17.1" height="11.7" fill="#636363" /><rect x="539.95" y="439.1" width="17.1" height="61.2" fill="#2b8a7e" /><rect x="578.75" y="500.3" width="17.1" height="11.7" fill="#636363" /><rect x="578.75" y="439.1" width="17.1" height="61.2" fill="#2b8a7e" /><rect x="617.55" y="499.6" width="17.1" height="12.4" fill="#636363" /><rect x="617.55" y="439.5" width="17.1" height="60.1" fill="#2b8a7e" /><rect x="656.35" y="500.7" width="17.1" height="11.3" fill="#636363" /><rect x="656.35" y="443" width="17.1" height="57.7" fill="#2b8a7e" /><rect x="695.15" y="502.8" width="17.1" height="9.2" fill="#636363" /><rect x="695.15" y="458" width="17.1" height="44.8" fill="#2b8a7e" /><rect x="733.95" y="507" width="17.1" height="5" fill="#636363" /><rect x="733.95" y="485" width="17.1" height="22" fill="#2b8a7e" /><rect x="501.15" y="511.5" width="17.1" height="0.7" fill="#a5dcd3" /><text x="354.5" y="520.3" font-size="5.45" text-anchor="middle" fill="#6e7079" font-weight="normal" >2013</text><text x="393.3" y="520.3" font-size="5.45" text-anchor="middle" fill="#6e7079" font-weight="normal" >2014</text><text x="432.1" y="520.3" font-size="5.45" text-anchor="middle" fill="#6e7079" font-weight="normal" >2015</text><text x="470.9" y="520.3" font-size="5.45" text-anchor="middle" fill="#6e7079" font-weight="normal" >2016</text><text x="509.7" y="520.3" font-size="5.45" text-anchor="middle" fill="#6e7079" font-weight="normal" >2017</text><text x="548.5" y="520.3" font-size="5.45" text-anchor="middle" fill="#6e7079" font-weight="normal" >2018</text><text x="587.3" y="520.3" font-size="5.45" text-anchor="middle" fill="#6e7079" font-weight="normal" >2019</text><text x="626.1" y="520.3" font-size="5.45" text-anchor="middle" fill="#6e7079" font-weight="normal" >2020</text><text x="664.9" y="520.3" font-size="5.45" text-anchor="middle" fill="#6e7079" font-weight="normal" >2021</text><text x="703.7" y="520.3" font-size="5.45" text-anchor="middle" fill="#6e7079" font-weight="normal" >2022</text><text x="742.5" y="520.3" font-size="5.45" text-anchor="middle" fill="#6e7079" font-weight="normal" >2023</text><rect x="336.2" y="530.7" width="426.8" height="12" fill="#ffffff" stroke="#d6def3" stroke-width="0.6" rx="1.500"/><rect x="550.6" y="527.7" width="212.4" height="15" fill="#e9edfd" /><polygon points="550.6,542.7 550.6,541.6 620,541.4 640,538.5 652,533.8 664,533.2 720,533.7 748,535.2 763,537.2 763,542.7" fill="#d6defb"/><rect x="551.6" y="531.7" width="210.4" height="10" fill="url(#dots)" /><rect x="550.6" y="527.7" width="212.4" height="3.2" fill="#d5ddfb" /><line x1="550.6" x2="763" y1="542.7" y2="542.7" stroke="#cfd8fa" stroke-width="0.6"/><line x1="550.6" x2="550.6" y1="527.7" y2="542.7" stroke="#cfd8fa" stroke-width="0.48"/><line x1="763" x2="763" y1="527.7" y2="542.7" stroke="#cfd8fa" stroke-width="0.48"/><rect x="655.3" y="528.67" width="3" height="1.06" fill="#ffffff" rx="0.53"/><rect x="549.4" y="532.5" width="2.4" height="8.4" fill="#ffffff" stroke="#a9b7ea" stroke-width="0.6" rx="1.08"/><rect x="761.8" y="532.5" width="2.4" height="8.4" fill="#ffffff" stroke="#a9b7ea" stroke-width="0.6" rx="1.08"/><rect x="487.5" y="545.4" width="10.3" height="5.6" fill="#636363" rx="1.200"/><text x="499.9" y="550.1" font-size="5.4" text-anchor="start" fill="#333" font-weight="normal" >Juizado Especial</text><rect x="543.5" y="545.4" width="10.3" height="5.6" fill="#2b8a7e" rx="1.200"/><text x="556" y="550.1" font-size="5.4" text-anchor="start" fill="#333" font-weight="normal" >Justica Comum</text><rect x="596.6" y="545.4" width="10.3" height="5.6" fill="#f3d13b" rx="1.200"/><text x="608.9" y="550.1" font-size="5.4" text-anchor="start" fill="#333" font-weight="normal" >Fazenda Publica</text><rect x="652" y="545.4" width="10.3" height="5.6" fill="#d1392b" rx="1.200"/><text x="664.8" y="550.1" font-size="5.4" text-anchor="start" fill="#333" font-weight="normal" >Justiça Trabalhista</text><rect x="712.5" y="545.4" width="10.3" height="5.6" fill="#f7954a" rx="1.200"/><text x="725" y="550.1" font-size="5.4" text-anchor="start" fill="#333" font-weight="normal" >Justiça Federal</text></svg></div></div></div></body></html>
